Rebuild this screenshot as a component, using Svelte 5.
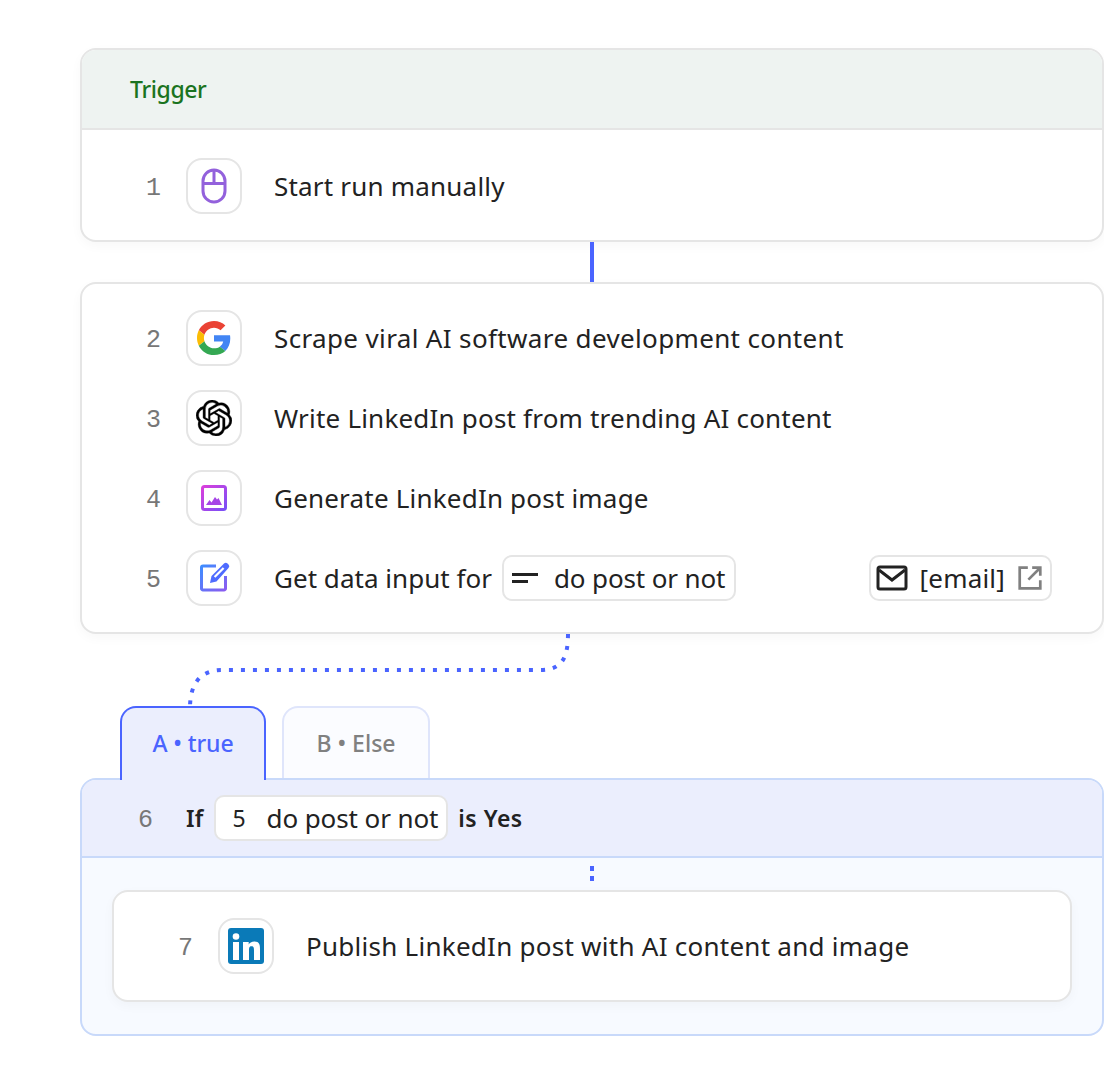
<script lang="ts">
	const manual = [{ n: 2, icon: 'google', text: 'Scrape viral AI software development content', wide: true },
		{ n: 3, icon: 'openai', text: 'Write LinkedIn post from trending AI content', wide: false },
		{ n: 4, icon: 'image', text: 'Generate LinkedIn post image', wide: false }];
</script>

{#snippet icon(name)}
	<span class="icon-box">
		{#if name === 'mouse'}
			<svg width="28" height="36" viewBox="0 0 28 36" fill="none" stroke="#9361dc" stroke-width="3">
				<rect x="3" y="2" width="22" height="32" rx="11" />
				<path d="M3 15.500h22M14 2v13.500" />
			</svg>
		{:else if name === 'google'}
			<svg width="34" height="34" viewBox="0 0 48 48">
				<path fill="#EA4335" d="M24 9.500c3.540 0 6.710 1.220 9.210 3.600l6.850-6.850C35.900 2.380 30.470 0 24 0 14.620 0 6.510 5.380 2.560 13.220l7.980 6.190C12.430 13.720 17.740 9.500 24 9.500z" />
				<path fill="#4285F4" d="M46.980 24.550c0-1.570-.15-3.090-.38-4.550H24v9.020h12.940c-.58 2.960-2.260 5.480-4.780 7.180l7.730 6c4.510-4.180 7.090-10.360 7.090-17.650z" />
				<path fill="#FBBC05" d="M10.530 28.590c-.48-1.450-.76-2.990-.76-4.590s.27-3.140.76-4.590l-7.980-6.190C.92 16.460 0 20.120 0 24c0 3.880.92 7.540 2.560 10.780l7.970-6.190z" />
				<path fill="#34A853" d="M24 48c6.480 0 11.930-2.130 16.030-5.810l-7.730-6c-2.150 1.450-4.920 2.300-8.300 2.300-6.260 0-11.570-4.220-13.470-9.910l-7.980 6.190C6.510 42.620 14.620 48 24 48z" />
			</svg>
		{:else if name === 'openai'}
			<svg width="36" height="36" viewBox="0 0 24 24" fill="#000" stroke="#000" stroke-width="0.25">
				<path d="M22.2819 9.8211a5.9847 5.9847 0 0 0-.5157-4.9108 6.0462 6.0462 0 0 0-6.5098-2.9A6.0651 6.0651 0 0 0 4.9807 4.1818a5.9847 5.9847 0 0 0-3.9977 2.9 6.0462 6.0462 0 0 0 .7427 7.0966 5.98 5.98 0 0 0 .511 4.9107 6.051 6.051 0 0 0 6.5146 2.9001A5.9847 5.9847 0 0 0 13.2599 24a6.0557 6.0557 0 0 0 5.7718-4.2058 5.9894 5.9894 0 0 0 3.9977-2.9001 6.0557 6.0557 0 0 0-.7475-7.0729zm-9.022 12.6081a4.4755 4.4755 0 0 1-2.8764-1.0408l.1419-.0804 4.7783-2.7582a.7948.7948 0 0 0 .3927-.6813v-6.7369l2.02 1.1686a.071.071 0 0 1 .038.052v5.5826a4.504 4.504 0 0 1-4.4945 4.4944zm-9.6607-4.1254a4.4708 4.4708 0 0 1-.5346-3.0137l.142.0852 4.783 2.7582a.7712.7712 0 0 0 .7806 0l5.8428-3.3685v2.3324a.0804.0804 0 0 1-.0332.0615L9.74 19.9502a4.4992 4.4992 0 0 1-6.1408-1.6464zM2.3408 7.8956a4.485 4.485 0 0 1 2.3655-1.9728V11.6a.7664.7664 0 0 0 .3879.6765l5.8144 3.3543-2.0201 1.1685a.0757.0757 0 0 1-.071 0l-4.8303-2.7865A4.504 4.504 0 0 1 2.3408 7.872zm16.5963 3.8558L13.1038 8.364 15.1192 7.2a.0757.0757 0 0 1 .071 0l4.8303 2.7913a4.4944 4.4944 0 0 1-.6765 8.1042v-5.6772a.79.79 0 0 0-.407-.667zm2.0107-3.0231l-.142-.0852-4.7735-2.7818a.7759.7759 0 0 0-.7854 0L9.409 9.2297V6.8974a.0662.0662 0 0 1 .0284-.0615l4.8303-2.7866a4.4992 4.4992 0 0 1 6.6802 4.66zM8.3065 12.863l-2.02-1.1638a.0804.0804 0 0 1-.038-.0567V6.0742a4.4992 4.4992 0 0 1 7.3757-3.4537l-.142.0805L8.704 5.459a.7948.7948 0 0 0-.3927.6813zm1.0976-2.3654l2.602-1.4998 2.6069 1.4998v2.9994l-2.5974 1.4997-2.6067-1.4997Z" />
			</svg>
		{:else if name === 'image'}
			<svg width="28" height="28" viewBox="0 0 28 28" fill="none">
				<defs>
					<linearGradient id="img" x1="0" y1="0" x2="1" y2="1">
						<stop offset="0" stop-color="#d93fdc" />
						<stop offset="1" stop-color="#7a4ff6" />
					</linearGradient>
				</defs>
				<rect x="2.500" y="2.500" width="23" height="23" rx="2" stroke="url(#img)" stroke-width="3" />
				<path d="M6 21l3.500-5 2 2.500 3.500-5.500 2 2.500 1.500-1.500 3.500 7z" fill="#a544e6" />
			</svg>
		{:else if name === 'edit'}
			<svg width="34" height="34" viewBox="0 2 34 34" fill="none">
				<defs>
					<linearGradient id="edit" x1="0" y1="0" x2="1" y2="1">
						<stop offset="0" stop-color="#3f8cff" />
						<stop offset="1" stop-color="#8a5cf0" />
					</linearGradient>
				</defs>
				<path d="M19 7H6a1.500 1.500 0 0 0-1.500 1.500v21A1.500 1.500 0 0 0 6 31h21a1.500 1.500 0 0 0 1.500-1.500V17" stroke="url(#edit)" stroke-width="3" />
				<path d="M13 24l1.500-7L27 4.500a2.500 2.500 0 0 1 3.500 0l1 1a2.500 2.500 0 0 1 0 3.500L19.500 22.500z" fill="#4f6bff" />
				<path d="M16.800 17.200l9-9 1.600 1.600-9 9z" fill="#fff" />
			</svg>
		{:else if name === 'linkedin'}
			<svg width="36" height="36" viewBox="0 0 36 36">
				<rect width="36" height="36" rx="3" fill="#0a7ab8" />
				<circle cx="8" cy="8.500" r="3.300" fill="#fff" />
				<path fill="#fff" d="M5 14h6v18H5zM15 14h5.700v2.500c.9-1.600 2.900-3 5.700-3 5 0 5.600 3.400 5.600 7.500v11h-6v-9.500c0-2.300-.1-4.300-2.500-4.300s-2.500 2-2.500 4.300V32h-6z" />
			</svg>
		{/if}
	</span>
{/snippet}

<div class="page">
	<section class="card">
		<header class="trigger">Trigger</header>
		<div class="row first">
			<span class="num">1</span>
			{@render icon('mouse')}
			<span class="label">Start run manually</span>
		</div>
	</section>

	<div class="connector"></div>

	<section class="card steps">
		{#each manual as step}
			<div class="row">
				<span class="num">{step.n}</span>
				{@render icon(step.icon)}
				<span class="label" class:wide={step.wide}>{step.text}</span>
			</div>
		{/each}
		<div class="row">
			<span class="num">5</span>
			{@render icon('edit')}
			<span class="label tight">Get data input for</span>
			<span class="chip var">
				<svg width="26" height="12" viewBox="0 0 26 12" fill="#222">
					<rect width="26" height="3" y="1" />
					<rect width="16" height="3" y="8" />
				</svg>
				do post or not
			</span>
			<span class="chip email">
				<svg width="32" height="26" viewBox="0 0 32 26" fill="none" stroke="#222" stroke-width="3">
					<rect x="2" y="2" width="28" height="22" rx="2" />
					<path d="M3 5l13 10L29 5" />
				</svg>
				[email]
				<svg width="26" height="26" viewBox="0 0 24 24" fill="none" stroke="#808080" stroke-width="2.500">
					<path d="M10 2.500H2.500v19h19V14M14 2.500h7.500V10M21 3L10.500 13.500" />
				</svg>
			</span>
		</div>
		<svg class="dots" width="400" height="76" viewBox="0 0 400 76" fill="none">
			<path d="M380 0c0 24-6 36-28 36H34C12 36 2 50 2 74" stroke="#4a64ff" stroke-width="4" stroke-dasharray="4 8" />
		</svg>
	</section>

	<div class="tabs">
		<div class="tab active">A • true</div>
		<div class="tab">B • Else</div>
	</div>

	<section class="branch">
		<div class="cond">
			<span class="num cond-num">6</span>
			<strong>If</strong>
			<span class="chip ref"><span class="ref-n">5</span> do post or not</span>
			<strong class="is">is Yes</strong>
		</div>
		<div class="branch-body">
			<div class="tiny-dots"></div>
			<div class="card inner">
				<div class="row">
					<span class="num">7</span>
					{@render icon('linkedin')}
					<span class="label">Publish LinkedIn post with AI content and image</span>
				</div>
			</div>
		</div>
	</section>
</div>

<style>
	:global(body) {
		margin: 0;
		background: #fff;
		font-family: "Noto Sans", "Open Sans", sans-serif;
		color: #222;
	}

	.page {
		width: 1024px;
		margin-left: 80px;
		padding: 48px 0;
		box-sizing: border-box;
		font-size: 26px;
		letter-spacing: 0.2px;
	}

	.card {
		background: #fff;
		border: 2px solid #e5e5e5;
		border-radius: 16px;
		box-shadow: 0 4px 12px rgba(0, 0, 0, 0.03);
	}

	.trigger {
		height: 78px;
		display: flex;
		align-items: center;
		padding-left: 48px;
		background: #eef3f1;
		border-bottom: 2px solid #e5e5e5;
		border-radius: 14px 14px 0 0;
		color: #1a7320;
		font-size: 23px;
		font-weight: 500;
		letter-spacing: -0.4px;
	}

	.row {
		display: flex;
		align-items: center;
		min-height: 56px;
	}

	.first {
		padding: 28px 0 26px;
	}

	.wide {
		letter-spacing: 0.36px;
	}

	.tight {
		letter-spacing: 0.03px;
	}

	.inner .label {
		letter-spacing: 0.26px;
	}

	.num {
		width: 80px;
		padding: 4px 1px 0 0;
		box-sizing: border-box;
		text-align: right;
		font-family: "Liberation Mono", monospace;
		font-size: 25px;
		color: #777;
		letter-spacing: 0;
	}

	.icon-box {
		display: flex;
		align-items: center;
		justify-content: center;
		flex: none;
		width: 56px;
		height: 56px;
		box-sizing: border-box;
		margin-left: 24px;
		margin-right: 32px;
		background: #fff;
		border: 2px solid #e5e5e5;
		border-radius: 16px;
	}

	.steps {
		position: relative;
		display: flex;
		flex-direction: column;
		gap: 24px;
		padding: 26px 0;
	}

	.connector {
		width: 4px;
		height: 40px;
		margin-left: 510px;
		background: #4a64ff;
	}

	.chip {
		display: inline-flex;
		align-items: center;
		height: 46px;
		box-sizing: border-box;
		background: #fff;
		border: 2px solid #e5e5e5;
		border-radius: 10px;
		padding: 0 8px;
		white-space: nowrap;
		letter-spacing: -0.13px;
	}

	.var {
		margin-left: 10px;
		padding-right: 9px;
		gap: 16px;
	}

	.email {
		margin-left: auto;
		margin-right: 50px;
		padding-left: 5px;
		padding-right: 7px;
		gap: 12px;
		letter-spacing: 0.2px;
	}

	.dots {
		position: absolute;
		left: 106px;
		top: 350px;
	}

	.tabs {
		display: flex;
		align-items: flex-start;
		gap: 16px;
		margin-top: 72px;
		margin-left: 40px;
		margin-bottom: -2px;
		position: relative;
		z-index: 1;
	}

	.tab {
		width: 148px;
		height: 72px;
		box-sizing: border-box;
		display: flex;
		align-items: center;
		justify-content: center;
		background: #fbfcff;
		border: 2px solid #dfe5fb;
		border-bottom: 0;
		border-radius: 16px 16px 0 0;
		color: #808080;
		font-size: 23px;
		font-weight: 500;
		letter-spacing: 0;
	}

	.active {
		width: 146px;
		height: 74px;
		padding-bottom: 2px;
		background: #ebeefd;
		border-color: #4a64ff;
		color: #4a64ff;
		letter-spacing: -0.1px;
	}

	.branch {
		border: 2px solid #c8d9fa;
		border-radius: 16px;
		background: #f7faff;
	}

	.cond {
		display: flex;
		align-items: center;
		height: 76px;
		background: #ebeefd;
		border-bottom: 2px solid #c8d9fa;
		border-radius: 14px 14px 0 0;
		font-size: 23px;
	}

	.cond strong {
		font-weight: 600;
	}

	.cond .is {
		letter-spacing: 0.5px;
	}

	.cond-num {
		width: 71px;
		padding-right: 0;
		margin-right: 33px;
	}

	.ref {
		margin: 0 10px 0 11px;
		height: 46px;
		padding: 0 8px 0 16px;
		font-size: 26px;
		gap: 21px;
		letter-spacing: -0.1px;
	}

	.ref-n {
		font-size: 23px;
	}

	.branch-body {
		padding: 8px 30px 32px;
	}

	.tiny-dots {
		width: 4px;
		height: 16px;
		margin: 0 0 8px 478px;
		background: linear-gradient(#4a64ff 0 5px, transparent 5px 10px, #4a64ff 10px 15px, transparent 15px);
	}

	.inner .row {
		height: 108px;
	}
</style>
